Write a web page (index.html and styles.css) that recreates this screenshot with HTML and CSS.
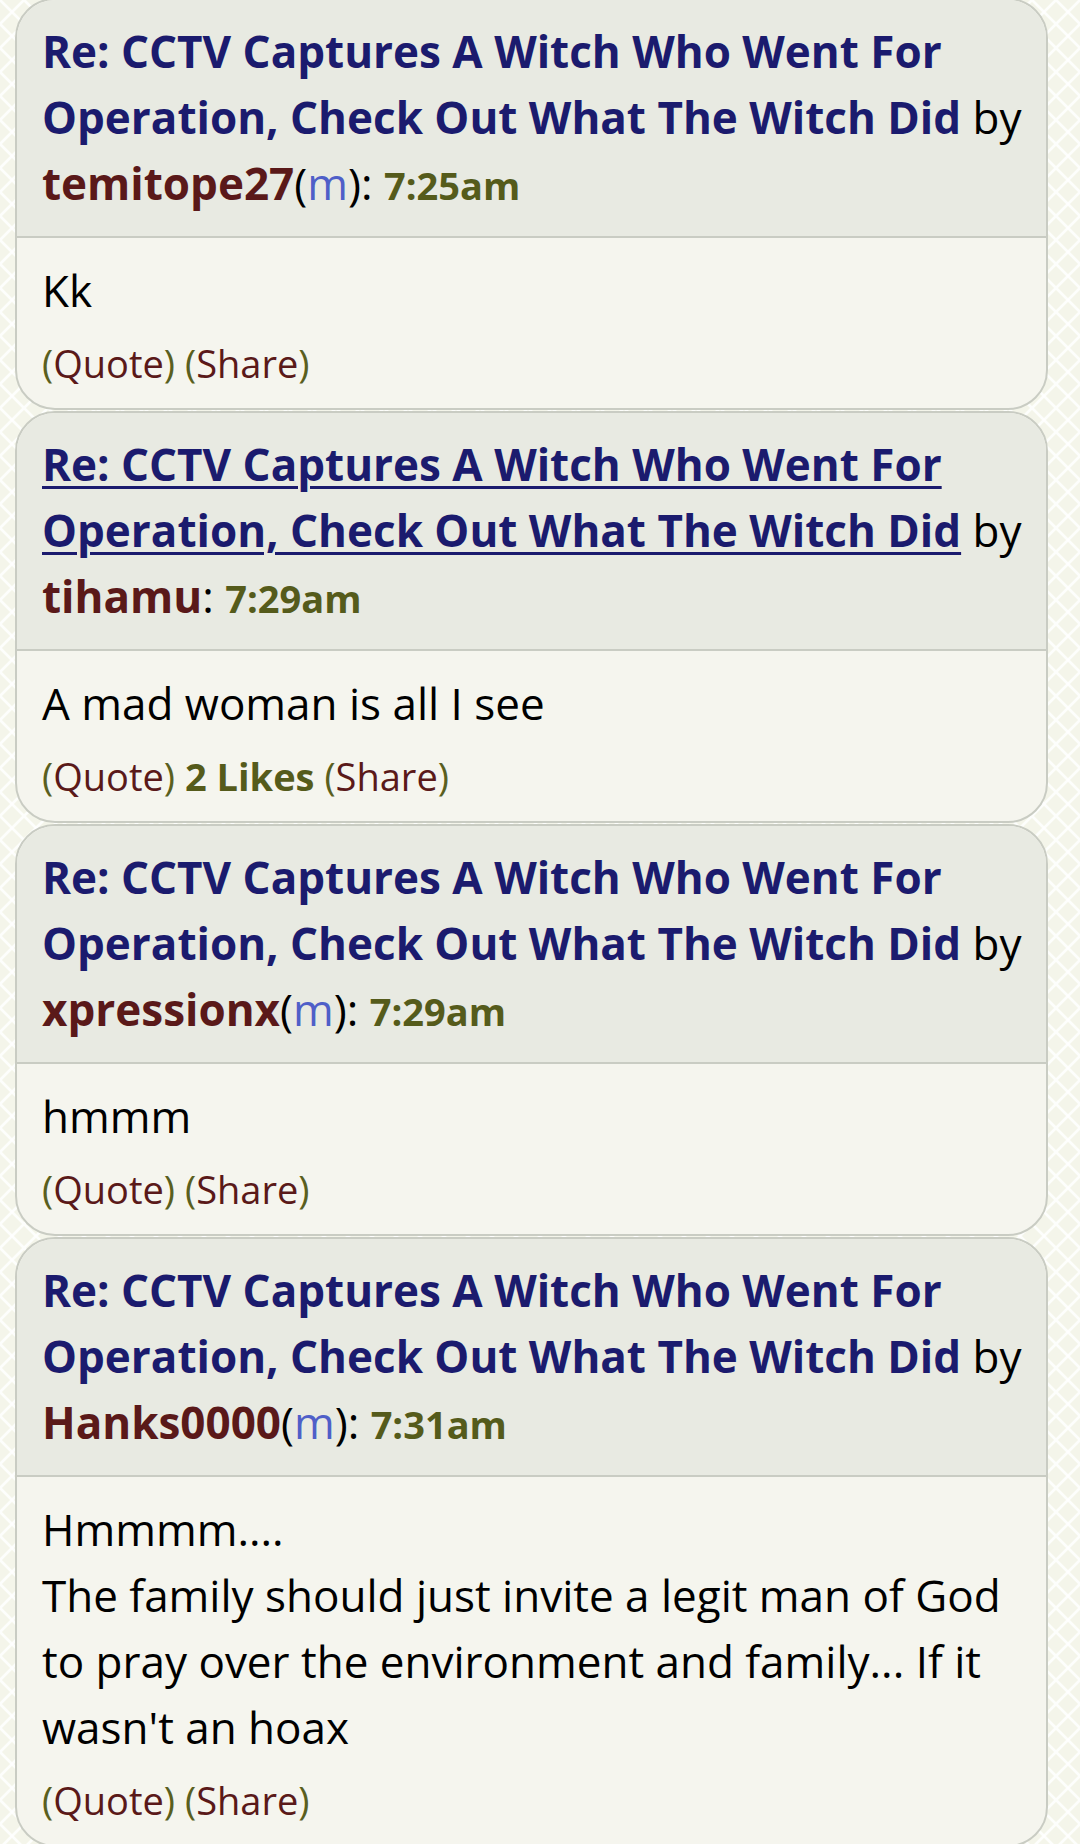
FILE: index.html
```html
<!DOCTYPE html>
<html lang="en">
<head>
<meta charset="utf-8">
<title>Nairaland thread</title>
<link rel="stylesheet" href="styles.css">
</head>
<body>
<main class="thread">
  <article class="post">
    <header class="post-head">
      <a class="title" href="#">Re: CCTV Captures A Witch Who Went For Operation, Check Out What The Witch Did</a> by <a class="user" href="#">temitope27</a>(<span class="gender">m</span>): <span class="time">7:25am</span>
    </header>
    <div class="post-body">
      <div class="text">Kk</div>
      <div class="actions"><span class="paren">(</span><a href="#">Quote</a><span class="paren">)</span> <span class="paren">(</span><a href="#">Share</a><span class="paren">)</span></div>
    </div>
  </article>

  <article class="post">
    <header class="post-head">
      <a class="title visited" href="#">Re: CCTV Captures A Witch Who Went For Operation, Check Out What The Witch Did</a> by <a class="user" href="#">tihamu</a>: <span class="time">7:29am</span>
    </header>
    <div class="post-body">
      <div class="text">A mad woman is all I see</div>
      <div class="actions"><span class="paren">(</span><a href="#">Quote</a><span class="paren">)</span> <b class="likes">2 Likes</b> <span class="paren">(</span><a href="#">Share</a><span class="paren">)</span></div>
    </div>
  </article>

  <article class="post">
    <header class="post-head">
      <a class="title" href="#">Re: CCTV Captures A Witch Who Went For Operation, Check Out What The Witch Did</a> by <a class="user" href="#">xpressionx</a>(<span class="gender">m</span>): <span class="time">7:29am</span>
    </header>
    <div class="post-body">
      <div class="text">hmmm</div>
      <div class="actions"><span class="paren">(</span><a href="#">Quote</a><span class="paren">)</span> <span class="paren">(</span><a href="#">Share</a><span class="paren">)</span></div>
    </div>
  </article>

  <article class="post">
    <header class="post-head">
      <a class="title" href="#">Re: CCTV Captures A Witch Who Went For Operation, Check Out What The Witch Did</a> by <a class="user" href="#">Hanks0000</a>(<span class="gender">m</span>): <span class="time">7:31am</span>
    </header>
    <div class="post-body">
      <div class="text">Hmmmm....<br>The family should just invite a legit man of God to pray over the environment and family... If it wasn't an hoax</div>
      <div class="actions"><span class="paren">(</span><a href="#">Quote</a><span class="paren">)</span> <span class="paren">(</span><a href="#">Share</a><span class="paren">)</span></div>
    </div>
  </article>

  <article class="post post-next">
    <header class="post-head"></header>
  </article>
</main>
</body>
</html>
```

FILE: styles.css
```css
html, body {
  margin: 0;
  padding: 0;
}

body {
  font-family: "Open Sans", "Noto Sans", sans-serif;
  color: #000;
  background-color: #f4f5ea;
  background-image:
    linear-gradient(45deg, transparent 45%, rgba(255,255,255,0.85) 47%, rgba(255,255,255,0.85) 53%, transparent 55%),
    linear-gradient(-45deg, transparent 45%, rgba(255,255,255,0.85) 47%, rgba(255,255,255,0.85) 53%, transparent 55%);
  background-size: 24px 24px;
  height: 1844px;
  overflow: hidden;
}

.thread {
  display: flex;
  flex-direction: column;
  gap: 1px;
  margin: -2px 32px 0 15px;
}

.post {
  border: 2px solid #c9ccc3;
  border-radius: 40px;
  overflow: hidden;
  background: #f5f5ee;
}

.post-head {
  background: #e8eae2;
  border-bottom: 2px solid #c9ccc3;
  padding: 18px 12px 18px 25px;
  font-size: 44px;
  line-height: 66px;
}

.post-next .post-head {
  height: 120px;
  padding: 0;
}

.title {
  color: #1b1b6e;
  font-weight: 700;
  text-decoration: none;
}

.title.visited {
  text-decoration: underline;
  text-decoration-thickness: 3px;
  text-underline-offset: 5px;
}

.user {
  color: #5a1919;
  font-weight: 700;
  text-decoration: none;
}

.gender {
  color: #4f5fc8;
}

.time {
  color: #555b1b;
  font-weight: 700;
  font-size: 38px;
}

.post-body {
  padding: 19px 25px 19px;
}

.text {
  font-size: 44px;
  line-height: 66px;
}

.actions {
  margin-top: 14px;
  font-size: 38px;
  line-height: 52px;
}

.actions a {
  color: #5a1919;
  text-decoration: none;
}

.paren {
  color: #5a5f1e;
}

.likes {
  color: #555b1b;
  font-weight: 700;
}
```
